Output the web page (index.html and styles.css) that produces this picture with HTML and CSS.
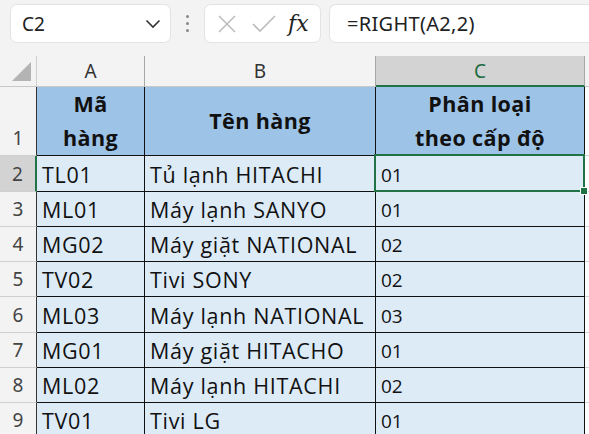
FILE: index.html
```html
<!doctype html>
<html>
  <head>
    <meta charset="utf-8" />
    <title>Phân loại theo cấp độ</title>
    <link rel="stylesheet" href="styles.css">
  </head>
  <body>
    <div class="toolbar">
        <div class="namebox">
            <span>C2</span>
            <svg class="chevron" width="16" height="10" viewBox="0 0 16 10"><path d="M1.5 1.5 L8 8 L14.5 1.5" fill="none" stroke="#333" stroke-width="1.6"/></svg>
        </div>
        <div class="dots"><i></i><i></i><i></i></div>
        <div class="fx-buttons">
            <svg width="22" height="22" viewBox="0 0 22 22"><path d="M3 3 L19 19 M19 3 L3 19" stroke="#bdbdbd" stroke-width="1.6" fill="none"/></svg>
            <svg width="26" height="22" viewBox="0 0 26 22"><path d="M2 11 L9 18 L24 3" stroke="#bdbdbd" stroke-width="1.6" fill="none"/></svg>
            <span class="fx">fx</span>
        </div>
        <div class="formula">=RIGHT(A2,2)</div>
    </div>

    <div class="sheet">
        <div class="corner"><span class="tri"></span></div>
        <div class="col-head">A</div>
        <div class="col-head">B</div>
        <div class="col-head active">C</div>
        <div class="col-head last"></div>

        <div class="row-head">1</div>
        <div class="cell title first">Mã<br>hàng</div>
        <div class="cell title">Tên hàng</div>
        <div class="cell title">Phân loại<br>theo cấp độ</div>
        <div class="blank"></div>

        <div class="row-head active">2</div>
        <div class="cell first">TL01</div>
        <div class="cell">Tủ lạnh HITACHI</div>
        <div class="cell code selected">01</div>
        <div class="blank"></div>

        <div class="row-head">3</div>
        <div class="cell first">ML01</div>
        <div class="cell">Máy lạnh SANYO</div>
        <div class="cell code">01</div>
        <div class="blank"></div>

        <div class="row-head">4</div>
        <div class="cell first">MG02</div>
        <div class="cell">Máy giặt NATIONAL</div>
        <div class="cell code">02</div>
        <div class="blank"></div>

        <div class="row-head">5</div>
        <div class="cell first">TV02</div>
        <div class="cell">Tivi SONY</div>
        <div class="cell code">02</div>
        <div class="blank"></div>

        <div class="row-head">6</div>
        <div class="cell first">ML03</div>
        <div class="cell">Máy lạnh NATIONAL</div>
        <div class="cell code">03</div>
        <div class="blank"></div>

        <div class="row-head">7</div>
        <div class="cell first">MG01</div>
        <div class="cell">Máy giặt HITACHO</div>
        <div class="cell code">01</div>
        <div class="blank"></div>

        <div class="row-head">8</div>
        <div class="cell first">ML02</div>
        <div class="cell">Máy lạnh HITACHI</div>
        <div class="cell code">02</div>
        <div class="blank"></div>

        <div class="row-head">9</div>
        <div class="cell first">TV01</div>
        <div class="cell">Tivi LG</div>
        <div class="cell code">01</div>
        <div class="blank"></div>
    </div>
  </body>
</html>
```

FILE: styles.css
```css
body {
    margin: 0;
    width: 589px;
    height: 434px;
    overflow: hidden;
    background: #f3f3f3;
    font-family: "Segoe UI", "Noto Sans", "Open Sans", sans-serif;
    color: #222;
}
.toolbar {
    height: 56px;
    display: flex;
    align-items: flex-start;
    padding: 4px 0 0 10px;
    box-sizing: border-box;
}
.namebox {
    width: 161px;
    height: 39px;
    box-sizing: border-box;
    background: #fff;
    border: 1px solid #e3e3e3;
    border-radius: 7px;
    display: flex;
    align-items: center;
    justify-content: space-between;
    padding: 0 9px 0 11px;
    font-size: 19px;
}
.dots {
    width: 33px;
    height: 39px;
    display: flex;
    flex-direction: column;
    align-items: center;
    justify-content: center;
    gap: 4px;
}
.dots i {
    width: 3px;
    height: 3px;
    border-radius: 50%;
    background: #888;
}
.fx-buttons {
    width: 117px;
    height: 39px;
    box-sizing: border-box;
    background: #fff;
    border: 1px solid #e3e3e3;
    border-radius: 7px;
    display: flex;
    align-items: center;
    gap: 13px;
    padding-left: 11px;
}
.fx {
    font-family: "DejaVu Serif", "Liberation Serif", serif;
    font-style: italic;
    font-size: 22px;
    color: #222;
    margin-left: -2px;
}
.formula {
    flex: 1;
    height: 39px;
    margin-left: 8px;
    box-sizing: border-box;
    background: #fff;
    border: 1px solid #e3e3e3;
    border-right: none;
    border-radius: 7px 0 0 7px;
    padding-left: 17px;
    display: flex;
    align-items: center;
    font-size: 20px;
    letter-spacing: 0.3px;
}
.sheet {
    display: grid;
    grid-template-columns: 37px 108px 231px 209px 1fr;
    grid-template-rows: 31px 69px 36px 35px 35px 35px 36px 35px 35px 35px;
}
.sheet > div {
    box-sizing: border-box;
}
.corner {
    border-right: 1px solid #cfcfcf;
    border-bottom: 1px solid #c8c8c8;
    display: flex;
    justify-content: flex-end;
    align-items: flex-end;
    padding: 0 5px 5px 0;
}
.tri {
    width: 0;
    height: 0;
    border-left: 19px solid transparent;
    border-bottom: 19px solid #b4b4b4;
}
.col-head {
    border-right: 1px solid #a8a8a8;
    border-bottom: 1px solid #c8c8c8;
    display: flex;
    align-items: center;
    justify-content: center;
    font-size: 19px;
    color: #333;
}
.col-head.active {
    background: #d3d3d3;
    color: #1e6b3f;
    border-bottom: 2px solid #217346;
}
.col-head.last {
    border-right: none;
}
.row-head {
    border-right: 1px solid #333;
    border-bottom: 1px solid #d0d0d0;
    display: flex;
    align-items: flex-end;
    justify-content: center;
    padding-bottom: 4px;
    font-size: 19px;
    color: #444;
}
.row-head.active {
    background: #d3d3d3;
    border-right: 2px solid #217346;
}
.cell {
    background: #ddebf7;
    border-right: 1px solid #111;
    border-bottom: 1px solid #111;
    display: flex;
    align-items: flex-end;
    padding: 0 0 2px 5px;
    font-family: "Open Sans", "Noto Sans", sans-serif;
    font-size: 21.5px;
    letter-spacing: 0.7px;
    white-space: nowrap;
    color: #111;
}
.cell.title {
    background: #9dc3e6;
    font-weight: bold;
    justify-content: center;
    align-items: center;
    text-align: center;
    line-height: 34px;
    font-size: 21.5px;
    letter-spacing: 0.4px;
    padding: 0 0 1px 0;
}
.cell.code {
    font-size: 19px;
    letter-spacing: 0;
    padding-bottom: 3px;
}
.cell.selected {
    position: relative;
}
.cell.selected::after {
    content: "";
    position: absolute;
    left: -2px;
    top: -2px;
    right: -1px;
    bottom: -1px;
    border: 2px solid #217346;
}
.cell.selected::before {
    content: "";
    position: absolute;
    right: -4px;
    bottom: -4px;
    width: 6px;
    height: 6px;
    background: #217346;
    border: 1px solid #fff;
    z-index: 2;
}
.blank {
    background: #fff;
    border-bottom: 1px solid #d4d4d4;
}
```
